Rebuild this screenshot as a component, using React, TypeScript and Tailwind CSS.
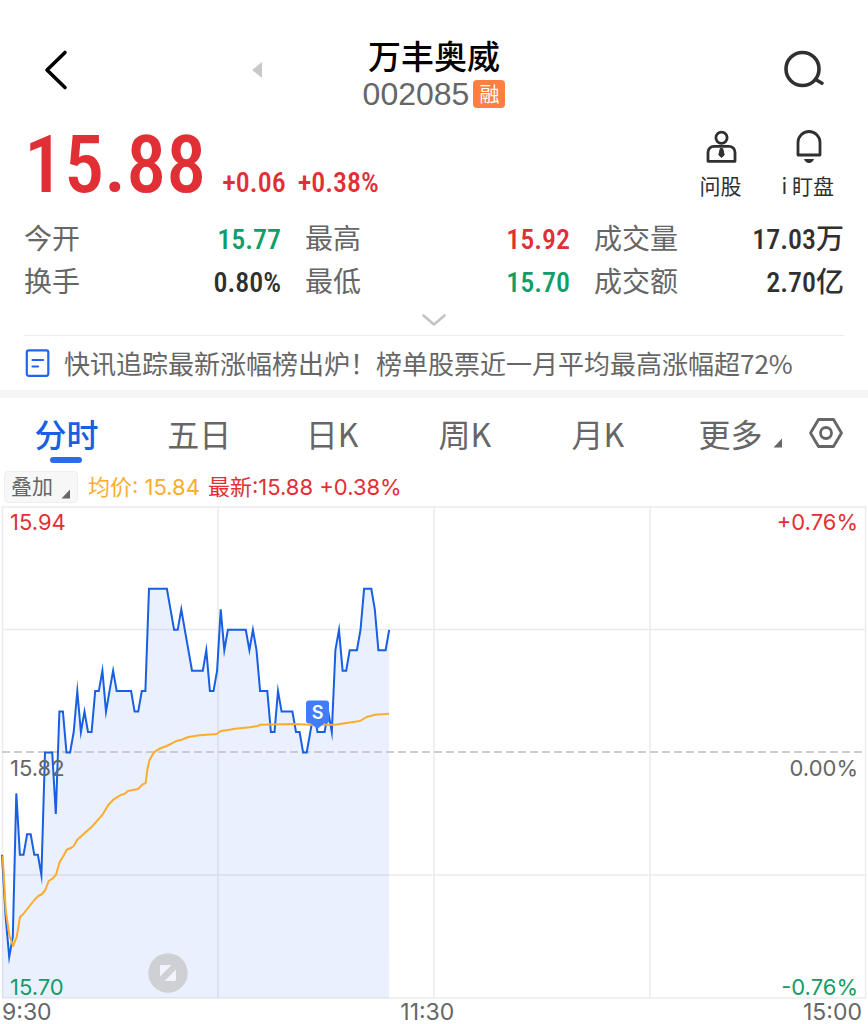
import React, { useState } from "react";
import clsx from "clsx";

const CHART_W = 864;
const CHART_H = 491;
const MIN_STEP = 3.585;
const LOW = 1570;
const RANGE = 24;

// price per minute, in cents
const prices = [
  1577, 1574, 1572, 1573, 1580, 1577, 1577, 1578, 1578, 1577, 1577, 1576,
  1582, 1582, 1582, 1579, 1584, 1584, 1582, 1582, 1583, 1585, 1583, 1584,
  1583, 1583, 1585, 1585, 1586, 1584, 1585, 1586, 1585, 1585, 1585, 1585,
  1585, 1584, 1584, 1585, 1585, 1590, 1590, 1590, 1590, 1590, 1590, 1589,
  1588, 1588, 1589, 1588, 1587, 1586, 1586, 1586, 1586, 1587, 1585, 1585,
  1586, 1589, 1587, 1588, 1588, 1588, 1588, 1588, 1588, 1587, 1588, 1587,
  1585, 1585, 1585, 1583, 1583, 1585, 1584, 1584, 1584, 1584, 1583, 1583,
  1582, 1582, 1583, 1584, 1583, 1583, 1583, 1584, 1583, 1587, 1588, 1586,
  1586, 1587, 1587, 1587, 1588, 1590, 1590, 1590, 1589, 1587, 1587, 1587,
  1588,
];

const averageLine =
  "0.7,348.7 3.7,403 7.3,428 11,439 14.7,430 18,410 21.3,407 32.3,393 36.3,389 40,387 43.3,383 46.7,374 50.3,371.7 54,367.7 57.7,354.7 61,349.7 64.7,342.7 68.3,341.3 71.7,339 75.3,332.7 86.3,322.7 90,319.7 100.7,307.3 106.3,298 111.3,292.7 118.7,288 122.3,287 126,284 136,282 140.3,277.7 143.7,276 145.3,263 147.3,253.7 151.3,246.3 154.7,243.3 159,241 164.7,239 175.3,233.7 179.7,232.7 186.3,230 198,228.3 214.7,227 218.7,224 224.7,223.3 233,221.7 248,220.3 255.3,219 258.7,217.7 291.3,217 308,217.7 333,217.7 339.7,216.7 358,214 364.7,210 373,207.7 387,206.7";

const priceLine = prices
  .map((p, i) => {
    const y = CHART_H - ((p - LOW) / RANGE) * CHART_H;
    return `${(i * MIN_STEP).toFixed(1)},${y.toFixed(1)}`;
  })
  .join(" ");

const lastX = (prices.length - 1) * MIN_STEP;

const stats = [
  { label: "今开", value: "15.77", color: "text-[#0f9d69]" },
  { label: "最高", value: "15.92", color: "text-[#e03036]" },
  { label: "成交量", value: "17.03万", color: "text-[#303030]" },
  { label: "换手", value: "0.80%", color: "text-[#303030]" },
  { label: "最低", value: "15.70", color: "text-[#0f9d69]" },
  { label: "成交额", value: "2.70亿", color: "text-[#303030]" },
];

const tabs = ["分时", "五日", "日K", "周K", "月K", "更多"];

const Corner = () => (
  <svg width="10" height="10" viewBox="0 0 10 10" fill="#666">
    <path d="M9 .5v9H.5z" />
  </svg>
);

const Header = () => (
  <header className="grid grid-cols-[1fr_auto_1fr] items-center px-10 pt-[34px]">
    <div className="flex items-center justify-between pr-[100px] pb-[6px]">
      <button aria-label="返回" className="flex">
        <svg width="32" height="42" viewBox="0 0 32 42" fill="none" stroke="#000" strokeWidth="3.6" strokeLinecap="round" strokeLinejoin="round">
          <path d="M25 3.5 7 21l18 17.500" />
        </svg>
      </button>
      <button aria-label="上一只" className="flex">
        <svg width="12" height="18" viewBox="0 0 12 18" fill="#c8c8c8">
          <path d="M11 1v16L1 9z" />
        </svg>
      </button>
    </div>
    <div className="flex flex-col items-center">
      <h1 className="text-[33px] leading-[42px] font-medium text-black">万丰奥威</h1>
      <div className="flex items-center gap-1">
        <span className="font-['Liberation_Sans'] text-[32px] leading-9 text-[#666]">002085</span>
        <span className="rounded-sm bg-[#ff7f40] px-[6px] text-[20px] leading-7 text-white">融</span>
      </div>
    </div>
    <button aria-label="搜索" className="flex justify-self-end pb-[6px]">
      <svg width="46" height="42" viewBox="0 0 46 42" fill="none" stroke="#303030" strokeWidth="3.6" strokeLinecap="round">
        <circle cx="20.500" cy="20" r="16.500" />
        <path d="m34.500 31 5.500 3.200" />
      </svg>
    </button>
  </header>
);

const Quote = () => (
  <section className="px-6 pt-[18px]">
    <div className="flex items-end justify-between">
      <div className="flex items-baseline font-['Roboto_Condensed','Roboto',sans-serif] font-medium text-[#e03036]">
        <strong className="text-[80px] leading-14 font-medium">15.88</strong>
        <span className="pl-4 text-[28px]">+0.06</span>
        <span className="pl-3 text-[28px]">+0.38%</span>
      </div>
      <div className="flex gap-10 pr-[10px] pb-[5px] text-[21px] leading-7 text-[#303030]">
        <button className="flex flex-col items-center gap-[7px]">
          <svg width="34" height="34" viewBox="0 0 34 34" fill="none" stroke="#303030" strokeWidth="2.800" strokeLinejoin="round">
            <circle cx="17.500" cy="7.700" r="5.600" />
            <path d="M4 31.300v-9a6 6 0 0 1 6-6h15a6 6 0 0 1 6 6v9z" />
            <path d="M16.300 18.500h2.400l1.500 6.500-2.700 2.500-2.700-2.500z" fill="#303030" strokeWidth="1" />
          </svg>
          问股
        </button>
        <button className="flex flex-col items-center gap-[7px]">
          <svg width="34" height="34" viewBox="0 0 34 34" fill="none" stroke="#303030" strokeWidth="2.800" strokeLinejoin="round">
            <path d="M7 25V12.500a11 11 0 0 1 22 0V25z" />
            <path d="M13 29h10q-1.500 4-5 4t-5-4z" fill="#303030" stroke="none" />
          </svg>
          i 盯盘
        </button>
      </div>
    </div>
    <dl className="grid grid-cols-[257fr_265fr_250fr] gap-x-6 pt-3">
      {stats.map((s) => (
        <div key={s.label} className="flex items-baseline justify-between">
          <dt className="text-[28px] leading-[43px] text-[#666]">{s.label}</dt>
          <dd className={clsx("font-['Roboto_Condensed','Roboto','Noto_Sans_CJK_SC',sans-serif] text-[28px] leading-none font-medium", s.color)}>
            {s.value}
          </dd>
        </div>
      ))}
    </dl>
    <button aria-label="展开" className="mx-auto flex pt-[11px] pb-2">
      <svg width="26" height="14" viewBox="0 0 26 14" fill="none" stroke="#c4c4c4" strokeWidth="2.600" strokeLinecap="round" strokeLinejoin="round">
        <path d="m2.500 2.500 10.500 9 10.500-9" />
      </svg>
    </button>
    <a href="#news" className="flex items-center gap-[14px] border-t border-[#ececec] text-[#666]">
      <svg className="shrink-0" width="26" height="28" viewBox="0 0 26 28" fill="none" stroke="#2264f0" strokeWidth="2.200" strokeLinecap="round">
        <rect x="2.800" y="1.300" width="21.500" height="25.500" rx="2" />
        <path d="M8.500 11h10.500M8.500 17.500h5.500" />
      </svg>
      <span className="truncate text-[26px] leading-[54px]">快讯追踪最新涨幅榜出炉！榜单股票近一月平均最高涨幅超72%</span>
    </a>
  </section>
);

const Chart = () => (
  <section className="px-[2px] font-['Inter','Noto_Sans_CJK_SC',sans-serif]">
    <div className="relative">
      <svg className="block h-auto w-full overflow-visible" viewBox={`0 0 ${CHART_W} ${CHART_H}`} fill="none">
        <g stroke="#ececee" strokeWidth="1.500">
          <rect x=".5" y="0" width="863" height="491" />
          <path d="M216 0v491M432 0v491M648 0v491M0 122.500h864M0 368h864" />
        </g>
        <polygon points={`0,${CHART_H} ${priceLine} ${lastX},${CHART_H}`} fill="#2f6bf0" fillOpacity=".1" />
        <path d="M0 245h864" stroke="#bcbec4" strokeWidth="1.600" strokeDasharray="8 4" />
        <polyline points={priceLine} stroke="#185fe2" strokeWidth="2" strokeMiterlimit="12" />
        <polyline points={averageLine} stroke="#fcac2c" strokeWidth="2" strokeLinejoin="round" />
        <path d="M307 193.500h17a3 3 0 0 1 3 3v17a3 3 0 0 1-3 3h-2l-6.500 5.500-6.500-5.500h-2a3 3 0 0 1-3-3v-17a3 3 0 0 1 3-3z" fill="#3f7dfb" />
        <text x="315.500" y="211.500" textAnchor="middle" fontSize="18" fontWeight="600" fill="#fff">S</text>
      </svg>
      <div className="absolute inset-0 flex flex-col justify-between px-2 pt-1 text-[22px] leading-[22px] text-[#666]">
        <div className="flex justify-between text-[#e03036]">
          <span>15.94</span>
          <span>+0.76%</span>
        </div>
        <div className="flex justify-between pt-[26px]">
          <span>15.82</span>
          <span>0.00%</span>
        </div>
        <div className="flex justify-between text-[#0f9d69]">
          <span>15.70</span>
          <span>-0.76%</span>
        </div>
      </div>
      <button aria-label="全屏" className="absolute bottom-[5px] left-[146px]">
        <svg width="40" height="40" viewBox="0 0 40 40">
          <circle cx="20" cy="20" r="19.700" fill="#cfd0d3" />
          <path d="M13 12h10.500L12 23.500V13a1 1 0 0 1 1-1zM27 28H16.500L28 16.500V27a1 1 0 0 1-1 1z" fill="#f1f4fc" />
        </svg>
      </button>
    </div>
    <div className="flex justify-between pr-1 text-[23px] leading-7 text-[#666]">
      <span>9:30</span>
      <span>11:30</span>
      <span>15:00</span>
    </div>
  </section>
);

export default function App() {
  const [active, setActive] = useState("分时");

  return (
    <main className="w-full bg-white font-['Noto_Sans_CJK_SC',sans-serif]">
      <Header />
      <Quote />
      <div className="h-2 bg-[#f5f5f5]" />
      <nav className="flex items-center gap-[11px] pr-6">
        <div className="flex flex-1">
          {tabs.map((t) => (
            <button
              key={t}
              onClick={() => setActive(t)}
              className={clsx(
                "relative flex flex-1 justify-center text-[32px] leading-[70px]",
                active === t ? "font-medium text-[#185fe2]" : "text-[#666]"
              )}
            >
              {t}
              {active === t && (
                <span className="absolute bottom-[5px] h-[6px] w-8 rounded-full bg-[#2f6be8]" />
              )}
              {t === "更多" && (
                <span className="absolute right-[14px] bottom-5">
                  <Corner />
                </span>
              )}
            </button>
          ))}
        </div>
        <button aria-label="设置" className="flex">
          <svg width="36" height="36" viewBox="0 0 36 36" fill="none" stroke="#666" strokeWidth="2.800" strokeLinejoin="round">
            <path d="M10.500 4.500h15L33.500 18l-8 13.500h-15L2.500 18z" />
            <circle cx="18" cy="18" r="5.500" />
          </svg>
        </button>
      </nav>
      <div className="flex items-center gap-[10px] px-1 pt-[3px] pb-1 font-['Inter','Noto_Sans_CJK_SC',sans-serif] text-[22px] leading-[30px]">
        <button className="flex items-end gap-2 rounded-sm border border-[#eee] bg-[#f7f7f7] px-[6px] text-[21px] text-[#666]">
          叠加
          <span className="pb-[3px]">
            <Corner />
          </span>
        </button>
        <p className="flex gap-2 text-[#e03036]">
          <span className="text-[#fcac2c]">均价: 15.84</span>
          <span>最新:15.88 +0.38%</span>
        </p>
      </div>
      <Chart />
    </main>
  );
}
